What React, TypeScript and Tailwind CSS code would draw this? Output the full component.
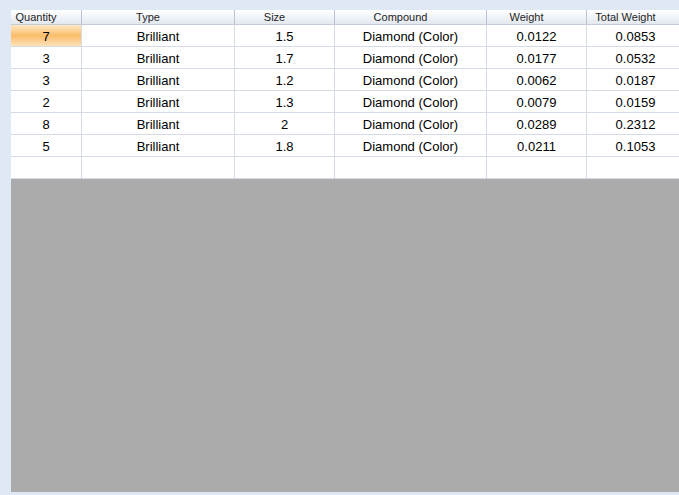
const columns = [
  { label: 'Quantity', width: 'w-[71px]' },
  { label: 'Type', width: 'w-[153px]' },
  { label: 'Size', width: 'w-[100px]' },
  { label: 'Compound', width: 'w-[152px]' },
  { label: 'Weight', width: 'w-[100px]' },
  { label: 'Total Weight', width: 'w-[98px]' },
];

const rows = [
  ['7', 'Brilliant', '1.5', 'Diamond (Color)', '0.0122', '0.0853'],
  ['3', 'Brilliant', '1.7', 'Diamond (Color)', '0.0177', '0.0532'],
  ['3', 'Brilliant', '1.2', 'Diamond (Color)', '0.0062', '0.0187'],
  ['2', 'Brilliant', '1.3', 'Diamond (Color)', '0.0079', '0.0159'],
  ['8', 'Brilliant', '2', 'Diamond (Color)', '0.0289', '0.2312'],
  ['5', 'Brilliant', '1.8', 'Diamond (Color)', '0.0211', '0.1053'],
];

export default function App() {
  return (
    <div
      className="w-[679px] h-[495px] bg-[#dfe8f5] pl-[11px] pt-[10px] pb-[3px] overflow-hidden flex flex-col"
      style={{ fontFamily: '"Liberation Sans", Arial, sans-serif' }}
    >
      {/* Header */}
      <div className="flex h-[15px] shrink-0 bg-gradient-to-b from-[#ffffff] to-[#e3e8f0] border-b border-[#c5ccd8]">
        {columns.map((c) => (
          <div
            key={c.label}
            className={`${c.width} shrink-0 border-r border-[#b8c1cf] flex items-center justify-center pr-[20px] text-[11px] leading-none text-[#1e1e1e]`}
          >
            {c.label}
          </div>
        ))}
      </div>

      {/* Rows */}
      {rows.map((r, i) => (
        <div key={i} className="flex h-[22px] shrink-0">
          {r.map((v, j) => (
            <div
              key={j}
              className={`${columns[j].width} shrink-0 border-r border-b border-[#d5dbe5] flex items-center justify-center pt-[2px] text-[13px] text-black ${
                i === 0 && j === 0
                  ? 'bg-gradient-to-b from-[#fee9c4] via-[#fbbd6a] to-[#fde2b8]'
                  : 'bg-white'
              }`}
            >
              {v}
            </div>
          ))}
        </div>
      ))}

      {/* New row */}
      <div className="flex h-[22px] shrink-0">
        {columns.map((c) => (
          <div key={c.label} className={`${c.width} shrink-0 border-r border-b border-[#d5dbe5] bg-white`} />
        ))}
      </div>

      {/* Empty area */}
      <div className="flex-1 bg-[#ababab]" />
    </div>
  );
}
